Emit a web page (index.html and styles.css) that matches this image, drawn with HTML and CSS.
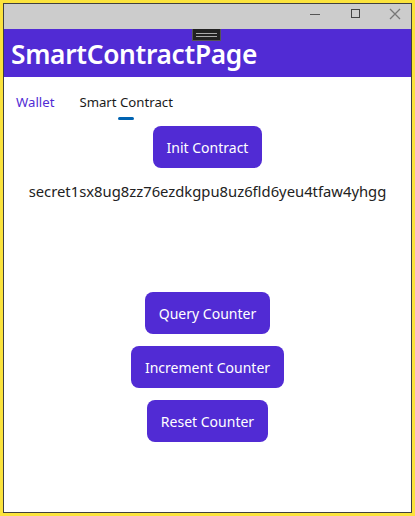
FILE: index.html
```html
<!DOCTYPE html>
<html>
<head>
<meta charset="utf-8">
<link rel="stylesheet" href="styles.css">
</head>
<body>
<div class="window">
  <div class="titlebar">
    <div class="controls">
      <span class="ctl min"><svg width="12" height="12" viewBox="0 0 12 12"><path d="M1 6.5h10" stroke="#555" stroke-width="1"/></svg></span>
      <span class="ctl max"><svg width="10" height="10" viewBox="0 0 10 10"><rect x="1.5" y="1.5" width="8" height="8" fill="none" stroke="#444" stroke-width="1"/></svg></span>
      <span class="ctl close"><svg width="12" height="12" viewBox="0 0 12 12"><path d="M1 1L11 11M11 1L1 11" stroke="#777" stroke-width="1.3"/></svg></span>
    </div>
  </div>
  <div class="header">
    <h1 class="title">SmartContractPage</h1>
    <div class="handle"><span></span><span></span></div>
  </div>
  <div class="content">
    <div class="tabs">
      <div class="tab active">Wallet</div>
      <div class="tab current">Smart Contract<span class="indicator"></span></div>
    </div>
    <button class="btn">Init Contract</button>
    <div class="address">secret1sx8ug8zz76ezdkgpu8uz6fld6yeu4tfaw4yhgg</div>
    <div class="actions">
      <button class="btn">Query Counter</button>
      <button class="btn">Increment Counter</button>
      <button class="btn">Reset Counter</button>
    </div>
  </div>
</div>
</body>
</html>
```
FILE: styles.css
```css
html, body {
  margin: 0;
  padding: 0;
}
body {
  background: #fbe33c;
  padding: 3px;
  width: 415px;
  height: 516px;
  box-sizing: border-box;
  font-family: "Noto Sans", "Open Sans", sans-serif;
}
.window {
  width: 409px;
  height: 510px;
  box-sizing: border-box;
  border: 1px solid #3f3f3f;
  background: #fff;
  display: flex;
  flex-direction: column;
}
.titlebar {
  height: 25px;
  background: #cccccc;
  display: flex;
  justify-content: flex-end;
  padding-right: 1px;
}
.controls {
  display: flex;
  gap: 10px;
}
.ctl {
  width: 30px;
  display: flex;
  justify-content: center;
  padding-top: 4px;
}
.ctl.max { padding-top: 4px; }
.ctl.close { padding-top: 4px; }
.header {
  height: 48px;
  background: #512bd4;
  position: relative;
  display: flex;
  align-items: center;
}
.title {
  margin: 0 0 0 7px;
  color: #fff;
  font-size: 26.3px;
  font-weight: 600;
  letter-spacing: -0.3px;
  line-height: 1;
  padding-top: 2px;
}
.handle {
  position: absolute;
  left: 188px;
  top: 0;
  width: 29px;
  height: 12px;
  box-sizing: border-box;
  background: #222;
  border: 1px solid #555;
  border-top: none;
  display: flex;
  flex-direction: column;
  align-items: center;
  justify-content: center;
  gap: 2px;
}
.handle span {
  display: block;
  width: 21px;
  height: 1px;
  background: #aaa;
}
.content {
  display: flex;
  flex-direction: column;
  align-items: center;
}
.tabs {
  align-self: stretch;
  display: flex;
  height: 49px;
  padding-left: 12px;
}
.tab {
  position: relative;
  font-size: 13.2px;
  padding: 16px 12px 0 0;
  margin-right: 12px;
  color: #1a1a1a;
}
.tab.active {
  color: #512bd4;
  margin-right: 13px;
}
.tab .indicator {
  position: absolute;
  left: 39px;
  top: 40px;
  width: 16px;
  height: 3px;
  border-radius: 2px;
  background: #0063b1;
}
.btn {
  font-family: inherit;
  font-size: 14px;
  color: #fff;
  background: #512bd4;
  border: none;
  border-radius: 8px;
  height: 42px;
  padding: 0 14px;
  cursor: pointer;
}
.address {
  margin-top: 12px;
  font-size: 14.8px;
  color: #222;
  line-height: 22px;
}
.actions {
  margin-top: 90px;
  display: flex;
  flex-direction: column;
  align-items: center;
  gap: 12px;
}
```
